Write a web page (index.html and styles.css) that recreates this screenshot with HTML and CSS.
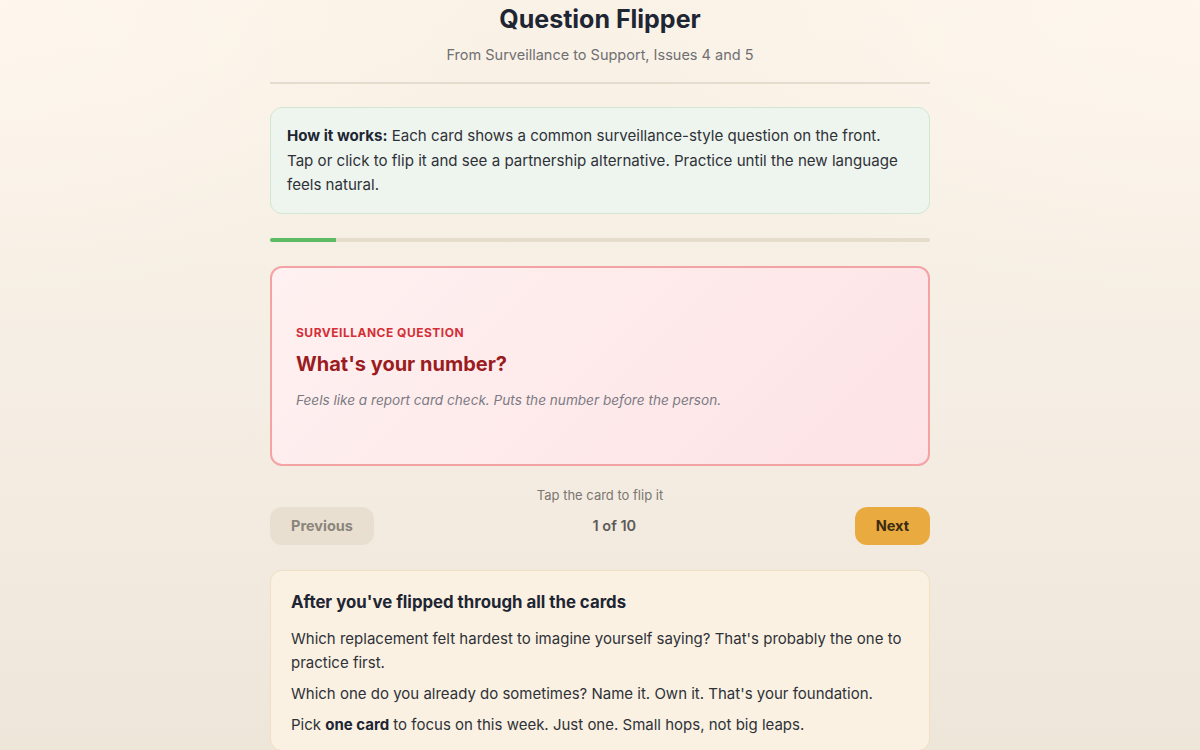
FILE: index.html
```html
<!DOCTYPE html>
<html lang="en">
<head>
  <meta charset="UTF-8" />
  <meta name="viewport" content="width=device-width, initial-scale=1.0" />
  <title>Question Flipper</title>
  <link rel="stylesheet" href="styles.css">
</head>
<body>
  <div class="container">
    <header class="header">
      <h1>Question Flipper</h1>
      <p class="subtitle">From Surveillance to Support, Issues 4 and 5</p>
    </header>

    <div class="intro">
      <strong>How it works:</strong> Each card shows a common surveillance-style question on the front.
      Tap or click to flip it and see a partnership alternative. Practice until the new language
      feels natural.
    </div>

    <div class="progress"><div class="progress-fill" style="width: 10%"></div></div>

    <div class="card">
      <div class="card-label">Surveillance Question</div>
      <div class="card-question">What's your number?</div>
      <div class="card-note">Feels like a report card check. Puts the number before the person.</div>
    </div>

    <p class="hint">Tap the card to flip it</p>
    <div class="nav">
      <button class="btn btn-prev">Previous</button>
      <span class="counter">1 of 10</span>
      <button class="btn btn-next">Next</button>
    </div>

    <div class="reflect">
      <h3>After you've flipped through all the cards</h3>
      <p>Which replacement felt hardest to imagine yourself saying? That's probably the one to practice first.</p>
      <p>Which one do you already do sometimes? Name it. Own it. That's your foundation.</p>
      <p>Pick <strong>one card</strong> to focus on this week. Just one. Small hops, not big leaps.</p>
    </div>
  </div>
</body>
</html>
```

FILE: styles.css
```css
:root {
  --ink: #1e2533;
  --text: #2f3138;
  --muted: #6f6f73;
  --line: #e4dccd;
}
body {
  margin: 0;
  min-height: 100vh;
  font-family: Inter, "Liberation Sans", sans-serif;
  color: var(--text);
  background:
    radial-gradient(ellipse 600px 300px at 1200px 0, rgba(255, 248, 240, 0.8), transparent),
    radial-gradient(ellipse 500px 300px at 0 0, rgba(255, 248, 240, 0.8), transparent),
    linear-gradient(180deg, #faf2e6 0%, #f5eee4 50%, #efe6da 100%);
}
.container {
  width: 660px;
  margin: 0 auto;
}
.header {
  text-align: center;
  padding-top: 2px;
  padding-bottom: 19px;
  border-bottom: 2px solid var(--line);
}
.header h1 {
  margin: 0;
  font-size: 25px;
  line-height: 34px;
  font-weight: 700;
  color: var(--ink);
}
.subtitle {
  margin: 10px 0 0;
  font-size: 14.5px;
  color: var(--muted);
}
.intro {
  margin-top: 23px;
  padding: 16px 24px 15px 16px;
  background: #eef5ee;
  border: 1px solid #d3e6d2;
  border-radius: 12px;
  font-size: 15.1px;
  line-height: 24.5px;
  color: var(--text);
}
.intro strong { color: var(--ink); }
.progress {
  margin-top: 24px;
  height: 4px;
  background: #e5dccb;
  border-radius: 2px;
  overflow: hidden;
}
.progress-fill {
  height: 100%;
  background: #5cbb63;
}
.card {
  margin-top: 24px;
  height: 200px;
  box-sizing: border-box;
  padding: 2px 24px 0;
  display: flex;
  flex-direction: column;
  justify-content: center;
  border: 2px solid #f4a3a4;
  border-radius: 12px;
  background: linear-gradient(135deg, #fff1f1 0%, #fde3e5 100%);
  cursor: pointer;
}
.card-label {
  font-size: 12px;
  font-weight: 700;
  letter-spacing: 0.5px;
  text-transform: uppercase;
  color: #d42f36;
}
.card-question {
  margin-top: 12px;
  font-size: 20px;
  font-weight: 700;
  color: #9b1c1f;
}
.card-note {
  margin-top: 16px;
  font-size: 13.6px;
  font-style: italic;
  color: #7b7a83;
}
.hint {
  margin: 21px 0 4px;
  text-align: center;
  font-size: 13px;
  color: #7a7670;
}
.nav {
  display: flex;
  justify-content: space-between;
  align-items: center;
}
.btn {
  height: 38px;
  padding: 0 21px;
  border: none;
  border-radius: 12px;
  font-family: Inter, "Liberation Sans", sans-serif;
  font-size: 14.5px;
  font-weight: 700;
  cursor: pointer;
}
.btn-prev {
  background: #e8dfd0;
  color: #8b857c;
}
.btn-next {
  background: #e9aa40;
  color: #3b2b12;
}
.counter {
  font-size: 14.5px;
  font-weight: 600;
  color: #5d5a56;
}
.reflect {
  margin-top: 25px;
  padding: 21px 20px 6px;
  background: #faf1e2;
  border: 1px solid #efe0c2;
  border-radius: 12px;
}
.reflect h3 {
  margin: 0 0 15px;
  font-size: 16.8px;
  font-weight: 700;
  color: var(--ink);
}
.reflect p {
  margin: 0 0 7px;
  font-size: 15px;
  line-height: 24px;
}
.reflect strong { color: var(--ink); }
```
